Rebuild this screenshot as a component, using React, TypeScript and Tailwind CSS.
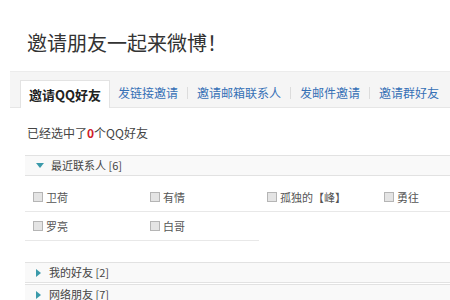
import React from 'react';

const font = { fontFamily: '"Noto Sans CJK SC", "Liberation Sans", sans-serif' };

const tabs = ['发链接邀请', '邀请邮箱联系人', '发邮件邀请', '邀请群好友'];

const recent = ['卫荷', '有情', '孤独的【峰】', '勇往', '罗亮', '白哥'];

function Friend({ name }: { name: string }) {
  return (
    <div className="w-[117px] h-[29px] flex items-center pl-[8px] border-b border-[#e8e8e8] text-[11px] text-[#555]">
      <span className="w-[10px] h-[10px] border border-[#b5b5b5] bg-[#e4e4e4] mr-[3px] shrink-0" />
      {name}
    </div>
  );
}

function Section({ title, open }: { title: string; open?: boolean }) {
  return (
    <div className="h-[21px] flex items-center pl-[11px] bg-[#f9f9f9] border-y border-[#e2e2e2] text-[11px] text-[#444]">
      {open ? (
        <span className="w-0 h-0 border-x-[4px] border-x-transparent border-t-[5px] border-t-[#3a9aaa] mr-[7px]" />
      ) : (
        <span className="w-0 h-0 border-y-[4px] border-y-transparent border-l-[5px] border-l-[#3a9aaa] mr-[8px]" />
      )}
      {title}
    </div>
  );
}

export default function App() {
  return (
    <div className="w-[450px] h-[300px] overflow-hidden bg-white" style={font}>
      <div className="pt-[31px] pl-[27px] text-[20px] leading-[24px] text-[#333]">邀请朋友一起来微博！</div>

      {/* tabs */}
      <div className="mt-[16px] ml-[10px] h-[37px] bg-[#f5f5f5] border-t border-[#ececec] border-b border-b-[#e6e6e6] flex items-end pl-[10px]">
        <div className="h-[28px] px-[8px] bg-white border border-b-0 border-[#e3e3e3] flex items-center text-[13px] font-bold text-[#222] -mb-px">
          邀请QQ好友
        </div>
        {tabs.map((t, i) => (
          <div key={t} className="h-[28px] flex items-center text-[12px] text-[#3570b5]">
            {i > 0 && <span className="w-px h-[12px] bg-[#dcdcdc] mx-[9px]" />}
            {i === 0 && <span className="w-[8px]" />}
            {t}
          </div>
        ))}
      </div>

      <div className="mt-[17px] pl-[27px] text-[12px] leading-[16px] text-[#444]">
        已经选中了<span className="text-[#d0202a] font-bold">0</span>个QQ好友
      </div>

      <div className="mt-[14px] ml-[25px]">
        <Section title="最近联系人 [6]" open />
        <div className="flex flex-wrap w-[468px] pt-[7px]">
          {recent.map((n) => (
            <Friend key={n} name={n} />
          ))}
        </div>
        <div className="mt-[21px]">
          <Section title="我的好友 [2]" />
          <div className="mt-[1px]">
            <Section title="网络朋友 [7]" />
          </div>
        </div>
      </div>
    </div>
  );
}
